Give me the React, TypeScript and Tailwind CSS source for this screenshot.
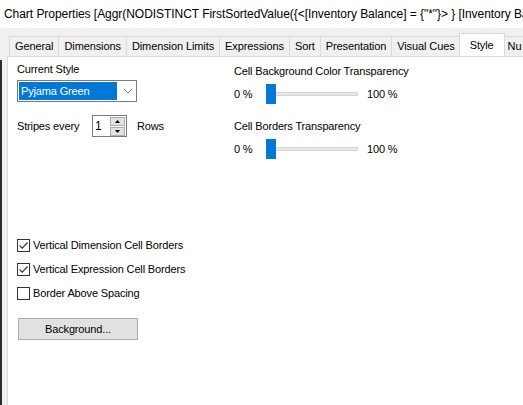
import React from "react";

const title = 'Chart Properties [Aggr(NODISTINCT FirstSortedValue({<[Inventory Balance] = {"*"}> } [Inventory Balance]';

const tabs = [
  "General",
  "Dimensions",
  "Dimension Limits",
  "Expressions",
  "Sort",
  "Presentation",
  "Visual Cues",
  "Style",
  "Nu",
];

function Checkbox({ label, checked }: { label: string; checked?: boolean }) {
  return (
    <label className="flex h-[13px] items-center gap-[3px]">
      <span className="flex h-[13px] w-[13px] items-center justify-center border border-[#333333] bg-white">
        {checked ? (
          <svg width="11" height="11" viewBox="0 0 11 11" aria-hidden="true">
            <path d="M1.5 5.5 L4.2 8.2 L9.5 2.5" fill="none" stroke="#333333" strokeWidth="1.2" />
          </svg>
        ) : null}
      </span>
      <span>{label}</span>
    </label>
  );
}

function Slider() {
  return (
    <div className="flex h-[20px] items-center">
      <span className="w-[32px]">0 %</span>
      <div className="relative flex h-[20px] w-[101px] items-center">
        <div className="ml-[1px] h-[4px] w-[91px] border border-[#d6d6d6] bg-[#e7e7e7]" />
        <div className="absolute left-0 top-0 h-[20px] w-[10px] bg-[#0078d7]" />
      </div>
      <span>100 %</span>
    </div>
  );
}

export default function App() {
  return (
    <div
      className="h-[405px] w-[523px] overflow-hidden bg-[#f0f0f0] text-[11px] tracking-[-0.15px] text-black"
      style={{ fontFamily: '"Liberation Sans", Arial, sans-serif' }}
    >
      <div className="flex h-[28px] items-center overflow-hidden whitespace-nowrap bg-white pl-[4px] text-[12px] tracking-[-0.05px]">
        {title}
      </div>

      <div className="flex">
        <div className="mt-[32px] h-[400px] w-[2px] shrink-0 bg-[#2b2b2b]" />
        <div className="flex min-w-0 flex-1 flex-col pl-[5px] pt-[5px]">
          <div className="flex h-[23px] items-end overflow-hidden whitespace-nowrap pl-[2px] tracking-[-0.1px]">
            {tabs.map((t) =>
              t === "Style" ? (
                <div
                  key={t}
                  className="relative z-10 -mb-[1px] -ml-[2px] -mr-[2px] flex h-[24px] items-start border border-b-0 border-[#d9d9d9] bg-white px-[10px] pt-[3px]"
                >
                  {t}
                </div>
              ) : (
                <div
                  key={t}
                  className="flex h-[20px] items-center border border-b-0 border-l-0 border-[#d9d9d9] bg-[#f0f0f0] px-[5px] first:border-l"
                >
                  {t}
                </div>
              )
            )}
          </div>

          <div className="h-[360px] w-[540px] border border-[#d9d9d9] bg-white pl-[9px] pt-[5px]">
            <div className="flex">
              <div className="w-[217px]">
                <div className="flex h-[14px] items-center">Current Style</div>
                <div className="mt-[4px] flex h-[22px] w-[120px] items-center border border-[#7a7a7a] p-[1px]">
                  <div className="flex h-[18px] w-[98px] items-center bg-[#0078d7] pl-[2px] text-white">Pyjama Green</div>
                  <svg className="ml-[6px]" width="10" height="6" viewBox="0 0 10 6" aria-hidden="true">
                    <path d="M1 1 L5 5 L9 1" fill="none" stroke="#8a8a8a" strokeWidth="1" />
                  </svg>
                </div>
                <div className="mt-[13px] flex h-[22px] items-center">
                  <span className="w-[75px]">Stripes every</span>
                  <div className="flex h-[22px] w-[35px] items-center border border-[#7a7a7a] bg-white">
                    <span className="flex-1 pl-[2px] text-[12px]">1</span>
                    <div className="mr-[1px] flex flex-col gap-[1px]">
                      <div className="flex h-[9px] w-[15px] items-center justify-center border border-[#adadad] bg-[#e1e1e1]">
                        <svg width="5" height="3" viewBox="0 0 5 3" aria-hidden="true">
                          <path d="M0 3 L2.5 0 L5 3 Z" fill="#000" />
                        </svg>
                      </div>
                      <div className="flex h-[9px] w-[15px] items-center justify-center border border-[#adadad] bg-[#e1e1e1]">
                        <svg width="5" height="3" viewBox="0 0 5 3" aria-hidden="true">
                          <path d="M0 0 L2.5 3 L5 0 Z" fill="#000" />
                        </svg>
                      </div>
                    </div>
                  </div>
                  <span className="ml-[10px]">Rows</span>
                </div>
              </div>

              <div className="pt-[2px]">
                <div className="flex h-[14px] items-center">Cell Background Color Transparency</div>
                <div className="mt-[6px]">
                  <Slider />
                </div>
                <div className="mt-[15px] flex h-[14px] items-center">Cell Borders Transparency</div>
                <div className="mt-[6px]">
                  <Slider />
                </div>
              </div>
            </div>

            <div className="mt-[80px] flex flex-col gap-[11px]">
              <Checkbox label="Vertical Dimension Cell Borders" checked />
              <Checkbox label="Vertical Expression Cell Borders" checked />
              <Checkbox label="Border Above Spacing" />
            </div>

            <button className="ml-[1px] mt-[18px] flex h-[22px] w-[120px] items-center justify-center border border-[#adadad] bg-[#e1e1e1]">
              Background...
            </button>
          </div>
        </div>
      </div>
    </div>
  );
}
